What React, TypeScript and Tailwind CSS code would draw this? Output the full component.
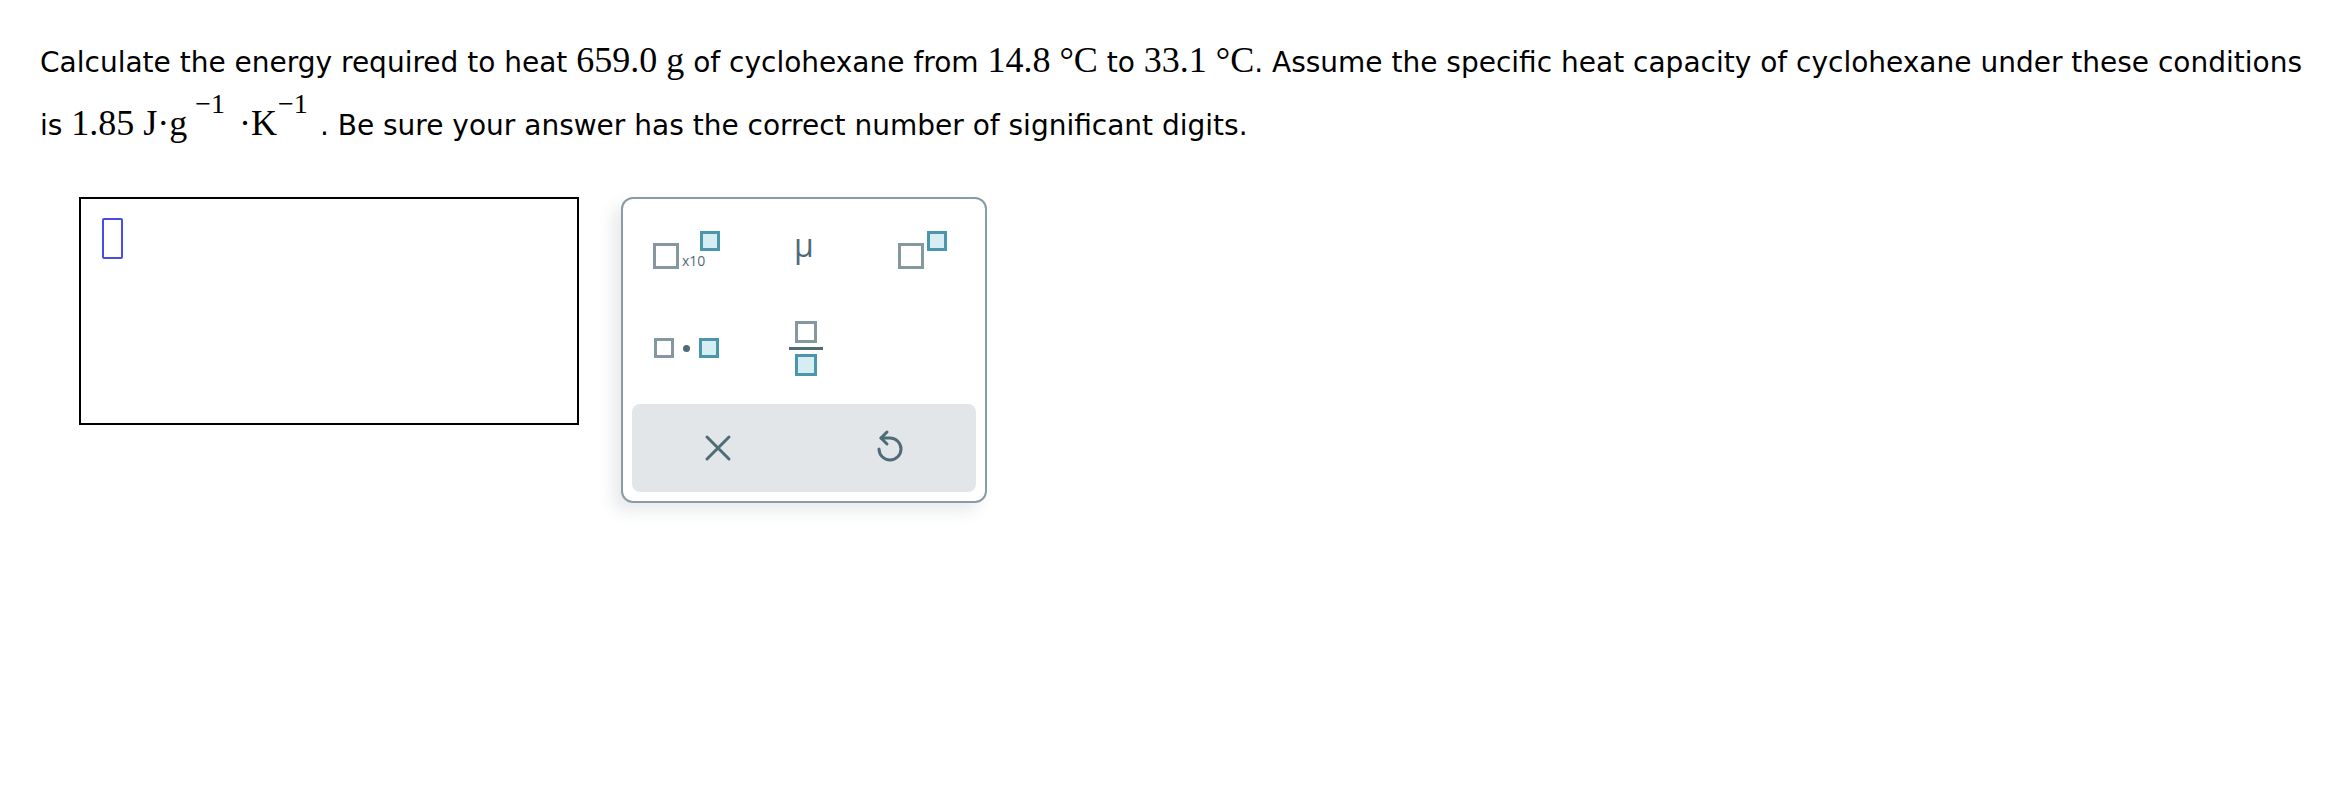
import React from 'react';

const serif = "font-['Liberation_Serif','Times_New_Roman',serif] text-[36px]";

const Sup: React.FC<{ children: React.ReactNode; tight?: boolean }> = ({ children, tight }) => (
  <span
    className={
      tight
        ? 'relative -top-[22px] ml-[1px] mr-[12px] text-[28px] leading-none'
        : 'relative -top-[22px] ml-[8px] mr-[14px] text-[28px] leading-none'
    }
  >
    {children}
  </span>
);

const GraySq: React.FC<{ size: number }> = ({ size }) => (
  <span
    className="block border-[3px] border-[#85979f] bg-white"
    style={{ width: size, height: size }}
  />
);

const TealSq: React.FC<{ size: number }> = ({ size }) => (
  <span
    className="block border-[3px] border-[#4a97ad] bg-[#d5edf3]"
    style={{ width: size, height: size }}
  />
);

const App: React.FC = () => {
  return (
    <div className="w-[2344px] h-[788px] bg-white font-['DejaVu_Sans','Verdana',sans-serif] text-black">
      {/* question text */}
      <div className="pl-[40px] pt-[30px] text-[28px] leading-[60px] whitespace-nowrap">
        <p>
          Calculate the energy required to heat <span className={serif}>659.0 g</span> of cyclohexane from{' '}
          <span className={serif}>14.8 °C</span> to <span className={serif}>33.1 °C</span>. Assume the specific heat
          capacity of cyclohexane under these conditions
          <br />
          is{' '}
          <span className={serif}>
            1.85 J·g<Sup>−1</Sup>·K<Sup tight>−1</Sup>
          </span>
          . Be sure your answer has the correct number of significant digits.
        </p>
      </div>

      {/* answer area */}
      <div className="flex items-start gap-[42px] pl-[79px] mt-[41px]">
        <div className="w-[500px] h-[228px] border-2 border-black pl-[21px] pt-[19px]">
          <div className="w-[21px] h-[41px] border-2 border-[#4b4bea] rounded-[2px]" />
        </div>

        <div className="w-[366px] h-[306px] border-2 border-[#8a9ba3] rounded-[12px] bg-white p-[9px] shadow-[-8px_8px_16px_rgba(60,80,90,0.12)]">
          <div className="grid grid-cols-[120px_120px_104px] h-[84px] items-center -ml-[6px]">
            <div className="flex justify-center">
              <div className="relative w-[66px] h-[38px]">
                <span className="absolute left-0 top-[12px]">
                  <GraySq size={26} />
                </span>
                <span className="absolute left-[29px] bottom-[1px] text-[14px] leading-none text-[#4f6b78] font-['Open_Sans',sans-serif]">x10</span>
                <span className="absolute left-[47px] top-0">
                  <TealSq size={20} />
                </span>
              </div>
            </div>
            <div className="flex justify-center pr-[4px]">
              <span className="text-[32px] leading-none text-[#4f6b78] font-['Open_Sans',sans-serif] -mt-[10px]">μ</span>
            </div>
            <div className="flex justify-center pl-[8px]">
              <div className="flex items-start">
                <span className="mt-[12px]">
                  <GraySq size={26} />
                </span>
                <span className="ml-[3px]">
                  <TealSq size={20} />
                </span>
              </div>
            </div>
          </div>

          <div className="grid grid-cols-[120px_120px_104px] h-[112px] items-center -ml-[6px]">
            <div className="flex justify-center">
              <div className="flex items-center gap-[9px]">
                <GraySq size={20} />
                <span className="w-[7px] h-[7px] rounded-full bg-[#4f6b78]" />
                <TealSq size={20} />
              </div>
            </div>
            <div className="flex justify-center">
              <div className="flex flex-col items-center">
                <GraySq size={22} />
                <span className="w-[34px] h-[3px] bg-[#4f6b78] my-[4px]" />
                <TealSq size={22} />
              </div>
            </div>
            <div />
          </div>

          <div className="grid grid-cols-2 h-[88px] bg-[#e2e6e8] rounded-[8px]">
            <div className="flex items-center justify-center">
              <svg width="30" height="30" viewBox="0 0 30 30" fill="none" stroke="#4f6b78" strokeWidth="3" strokeLinecap="round">
                <path d="M4 4 L26 26 M26 4 L4 26" />
              </svg>
            </div>
            <div className="flex items-center justify-center">
              <svg width="44" height="44" viewBox="8 11 44 44" fill="none" stroke="#4f6b78" strokeWidth="3" strokeLinecap="round" strokeLinejoin="round">
                <path d="M21 23 H30 A11 11 0 1 1 19 34" />
                <path d="M27 17 L21 23 L27 29" />
              </svg>
            </div>
          </div>
        </div>
      </div>
    </div>
  );
};

export default App;
